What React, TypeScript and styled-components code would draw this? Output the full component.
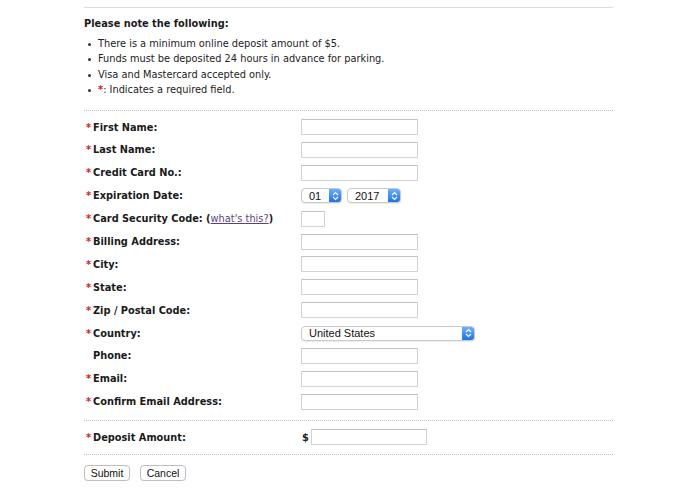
import React from "react";
import styled, {createGlobalStyle} from "styled-components";

const GlobalStyle = createGlobalStyle`
  body {
    margin: 0;
    background: #fff;
    font-family: "DejaVu Sans", Verdana, sans-serif;
    color: #222;
  }
`;

const Page = styled.div`
  width: 529px;
  margin-left: 84px;
  padding-top: 7px;
  font-size: 9.8px;
`;

const Rule = styled.div<{ dotted?: boolean }>`
  border-top: 1px ${p => p.dotted ? "dotted #c4c4c4" : "solid #dcdcdc"};
`;

const Heading = styled.div`
  margin-top: 9px;
  font-weight: bold;
  line-height: 13px;
  color: #1a1a1a;
`;

const NoteList = styled.ul`
  list-style: none;
  margin: 6px 0 12px 0;
  padding: 0;
`;

const NoteItem = styled.li`
  display: flex;
  align-items: center;
  line-height: 15.4px;
  &::before {
    content: "";
    width: 3px;
    height: 3px;
    border-radius: 50%;
    background: #333;
    margin: 1px 7px 0 4px;
  }
`;

const Star = styled.span`
  color: #d0202a;
  font-weight: bold;
`;

const FormGrid = styled.div`
  display: grid;
  grid-template-columns: 217px 1fr;
  grid-auto-rows: 22.9px;
  align-items: center;
  padding: 5px 0 6.5px;
`;

const Label = styled.div`
  display: flex;
  align-items: center;
  font-weight: bold;
  color: #1a1a1a;
  padding-left: 2px;
`;

const StarSlot = styled.span`
  width: 7px;
  color: #d0202a;
  font-weight: bold;
`;

const Help = styled.a`
  font-weight: normal;
  color: #5b3f8c;
  text-decoration: underline;
`;

const Field = styled.div<{ gap?: number }>`
  display: flex;
  align-items: center;
  gap: ${p => p.gap ?? 5}px;
`;

const TextInput = styled.input<{ w?: number }>`
  box-sizing: border-box;
  width: ${p => p.w ?? 117}px;
  height: 16px;
  margin: 0;
  border: 1px solid #d2d2d2;
  border-top-color: #c2c2c2;
  background: #fff;
  outline: none;
  padding: 0 3px;
`;

const SelectBox = styled.div<{ w: number }>`
  box-sizing: border-box;
  width: ${p => p.w}px;
  height: 15px;
  display: flex;
  align-items: center;
  border: 1px solid #c9c9c9;
  border-radius: 4px;
  background: #fff;
  box-shadow: 0 1px 1px rgba(0, 0, 0, 0.08);
  font-family: "Liberation Sans", Arial, sans-serif;
  font-size: 11px;
  color: #111;
  overflow: hidden;
`;

const SelectText = styled.span`
  flex: 1;
  padding-left: 7px;
`;

const Stepper = styled.span`
  width: 12px;
  height: 100%;
  display: flex;
  align-items: center;
  justify-content: center;
  background: linear-gradient(#6ab1fb, #1c72ea);
`;

const DepositGrid = styled.div`
  display: grid;
  grid-template-columns: 217px 1fr;
  height: 23px;
  align-items: center;
  margin: 5px 0 5px;
`;

const Dollar = styled.span`
  box-sizing: border-box;
  font-weight: bold;
  width: 10px;
  padding-left: 1px;
`;

const Buttons = styled.div`
  display: flex;
  gap: 10px;
  margin-top: 10px;
`;

const Btn = styled.button`
  box-sizing: border-box;
  width: 46px;
  height: 16px;
  padding: 0;
  border: 1px solid #bdbdbd;
  border-radius: 4px;
  background: #fff;
  box-shadow: 0 1px 1px rgba(0, 0, 0, 0.08);
  font-family: "Liberation Sans", Arial, sans-serif;
  font-size: 10.5px;
  color: #111;
`;

const Chevrons = () => (
  <svg width="7" height="10" viewBox="0 0 7 10">
    <path d="M1 4 L3.5 1.5 L6 4 M1 6 L3.5 8.5 L6 6" fill="none" stroke="#fff" strokeWidth="1.2"/>
  </svg>
);

const Select: React.FC<{ w: number, value: string }> = ({w, value}) => (
  <SelectBox w={w}>
    <SelectText>{value}</SelectText>
    <Stepper><Chevrons/></Stepper>
  </SelectBox>
);

interface RowType {
  label: React.ReactNode,
  required: boolean,
  field: React.ReactNode,
}

const rows: RowType[] = [
  {label: "First Name:", required: true, field: <TextInput/>},
  {label: "Last Name:", required: true, field: <TextInput/>},
  {label: "Credit Card No.:", required: true, field: <TextInput/>},
  {label: "Expiration Date:", required: true, field: <><Select w={41} value="01"/><Select w={54} value="2017"/></>},
  {
    label: <>Card Security Code:&nbsp;(<Help href="#">what's this?</Help>)</>,
    required: true,
    field: <TextInput w={24}/>
  },
  {label: "Billing Address:", required: true, field: <TextInput/>},
  {label: "City:", required: true, field: <TextInput/>},
  {label: "State:", required: true, field: <TextInput/>},
  {label: "Zip / Postal Code:", required: true, field: <TextInput/>},
  {label: "Country:", required: true, field: <Select w={174} value="United States"/>},
  {label: "Phone:", required: false, field: <TextInput/>},
  {label: "Email:", required: true, field: <TextInput/>},
  {label: "Confirm Email Address:", required: true, field: <TextInput/>},
];

const App: React.FC = () => {
  return (
    <Page>
      <GlobalStyle/>
      <Rule/>
      <Heading>Please note the following:</Heading>
      <NoteList>
        <NoteItem>There is a minimum online deposit amount of $5.</NoteItem>
        <NoteItem>Funds must be deposited 24 hours in advance for parking.</NoteItem>
        <NoteItem>Visa and Mastercard accepted only.</NoteItem>
        <NoteItem><span><Star>*</Star>: Indicates a required field.</span></NoteItem>
      </NoteList>
      <Rule dotted/>
      <FormGrid>
        {rows.map((row, i) => (
          <React.Fragment key={i}>
            <Label><StarSlot>{row.required ? "*" : ""}</StarSlot>{row.label}</Label>
            <Field>{row.field}</Field>
          </React.Fragment>
        ))}
      </FormGrid>
      <Rule dotted/>
      <DepositGrid>
        <Label><StarSlot>*</StarSlot>Deposit Amount:</Label>
        <Field gap={0}>
          <Dollar>$</Dollar>
          <TextInput w={116}/>
        </Field>
      </DepositGrid>
      <Rule dotted/>
      <Buttons>
        <Btn>Submit</Btn>
        <Btn>Cancel</Btn>
      </Buttons>
    </Page>
  );
};

export default App;
